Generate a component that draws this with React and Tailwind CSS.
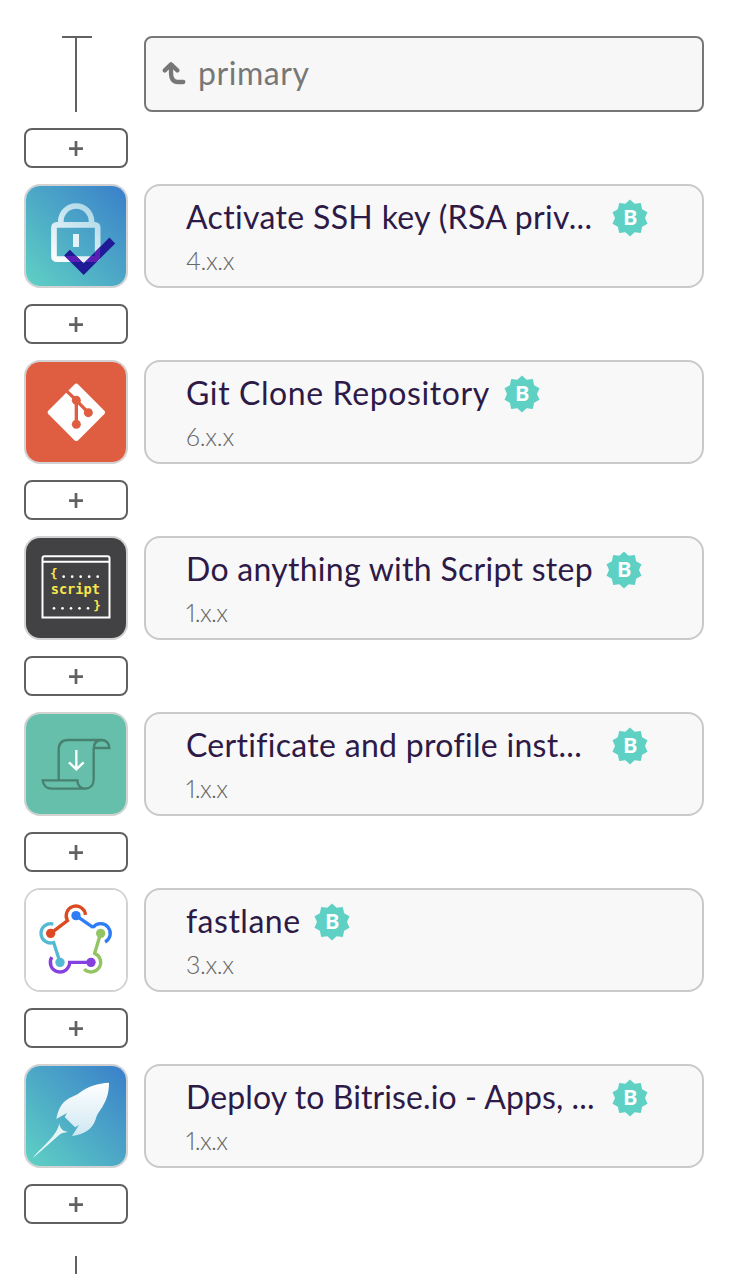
import { useId } from "react";

const STEPS = [
  { title: "Activate SSH key (RSA priv...", version: "4.x.x", Icon: LockIcon, width: "w-[414px]", tracking: "tracking-[0.33px]", versionTracking: "tracking-[-0.4px]" },
  { title: "Git Clone Repository", version: "6.x.x", Icon: GitIcon, width: "w-[306px]", tracking: "tracking-[0.6px]", versionTracking: "tracking-[-0.2px]" },
  { title: "Do anything with Script step", version: "1.x.x", Icon: ScriptIcon, width: "w-[408px]", tracking: "tracking-[0.28px]", versionTracking: "tracking-[-0.65px]" },
  { title: "Certificate and profile inst...", version: "1.x.x", Icon: CertificateIcon, width: "w-[414px]", tracking: "tracking-[0.3px]", versionTracking: "tracking-[-0.65px]" },
  { title: "fastlane", version: "3.x.x", Icon: FastlaneIcon, width: "w-[116px]", tracking: "tracking-[0.5px]", versionTracking: "tracking-[-0.4px]" },
  { title: "Deploy to Bitrise.io - Apps, ...", version: "1.x.x", Icon: RocketIcon, width: "w-[414px]", tracking: "tracking-[0.1px]", versionTracking: "tracking-[-0.65px]" },
];

export default function App() {
  return (
    <main className="h-[1274px] w-[748px] overflow-hidden bg-white pl-6 pt-9 font-['Lato',sans-serif]">
      <div className="flex flex-col gap-4">
        <WorkflowHeader />
        <AddButton />
        {STEPS.map((step) => (
          <Step key={step.title} {...step} />
        ))}
      </div>
      <div className="mt-8 flex w-[104px] justify-center">
        <div className="h-8 w-0.5 bg-[#616161]" />
      </div>
    </main>
  );
}

function WorkflowHeader() {
  return (
    <div className="flex gap-4">
      <div className="flex h-[76px] w-[104px] flex-col items-center">
        <div className="ml-0.5 h-0.5 w-[30px] bg-[#616161]" />
        <div className="w-0.5 flex-1 bg-[#616161]" />
      </div>
      <div className="flex h-[76px] w-[560px] items-center rounded-lg border-2 border-[#777] bg-[#f7f7f7] pb-0.5 pl-4 text-[#777]">
        <svg className="mr-3 h-6 w-6" viewBox="0 0 24 24" fill="none" stroke="currentColor" strokeWidth="4.300" strokeLinecap="round" strokeLinejoin="round">
          <path d="M2.800 9.400 9 3.300l6.300 6.100M9 4v7.500c0 6 2.500 9.500 7 9.500H21.300" />
        </svg>
        <span className="text-[32px] leading-10 tracking-[0.55px]">primary</span>
      </div>
    </div>
  );
}

function Step({ title, version, Icon, width, tracking, versionTracking }) {
  return (
    <>
      <div className="flex gap-4">
        <div className="h-[104px] w-[104px] overflow-hidden rounded-2xl border-2 border-[#d2d2d2]">
          <Icon />
        </div>
        <div className="h-[104px] w-[560px] rounded-2xl border-2 border-[#c9c9c9] bg-[#f8f8f8] pl-10 pt-3">
          <div className="flex h-10 items-center gap-3">
            <h2 className={`whitespace-nowrap pb-0.5 text-[32px] leading-10 text-[#2e1a47] ${width} ${tracking}`}>{title}</h2>
            <Badge />
          </div>
          <p className={`mt-1.5 text-[25px] font-light proportional-nums leading-8 text-[#666] ${versionTracking}`}>{version}</p>
        </div>
      </div>
      <AddButton />
    </>
  );
}

function AddButton() {
  return (
    <button className="flex h-10 w-[104px] items-center justify-center rounded-lg border-2 border-[#616161] bg-white">
      <svg className="h-4 w-4" viewBox="0 0 16 16" stroke="#616161" strokeWidth="2.700">
        <path d="M8 1v15M1 8.600h14" />
      </svg>
    </button>
  );
}

// Ten-pointed seal, alternating outer and inner radius
const SEAL_POINTS = Array.from({ length: 20 }, (_, i) => {
  const r = i % 2 ? 15 : 18.4;
  const a = (i * Math.PI) / 10;
  return `${(18 + r * Math.sin(a)).toFixed(2)},${(18 - r * Math.cos(a)).toFixed(2)}`;
}).join(" ");

function Badge() {
  return (
    <svg className="h-9 w-9 overflow-visible" viewBox="0 0 36 36">
      <polygon points={SEAL_POINTS} fill="#5fd1c4" />
      <text x="18.2" y="25.3" textAnchor="middle" fontSize="21" fontWeight="900" fill="#fff">B</text>
    </svg>
  );
}

/* --- step icons ------------------------------------------------------ */

function LockIcon() {
  const id = useId();
  return (
    <svg className="h-full w-full" viewBox="30 30 300 300" fill="none">
      <defs>
        <linearGradient id={`${id}bg`} x1="0" y1="1" x2="1" y2="0">
          <stop stopColor="#5fd1c4" />
          <stop offset="1" stopColor="#3a7fca" />
        </linearGradient>
        <linearGradient id={`${id}lock`} x1="110" y1="258" x2="240" y2="90" gradientUnits="userSpaceOnUse">
          <stop stopColor="#fff" />
          <stop offset="1" stopColor="#a9d5e6" />
        </linearGradient>
        <clipPath id={`${id}ring`}>
          <path clipRule="evenodd" d="M106 138h147v120H106zM122 155v85h115v-85z" />
        </clipPath>
      </defs>
      <path fill={`url(#${id}bg)`} d="M30 30h300v300H30z" />
      <path stroke={`url(#${id}lock)`} strokeWidth="17" d="M134.5 142v-6a46 46 0 0 1 92 0v6" />
      <rect x="114" y="146.500" width="131" height="103" rx="8" stroke={`url(#${id}lock)`} strokeWidth="17" />
      <path fill="#e4f3f7" d="M171 174h18v39h-18z" />
      <path stroke="#1f1a96" strokeWidth="24.500" d="m153 230 50 49.500 86-86" />
      <path stroke="#5a20b4" strokeWidth="24.500" d="m153 230 50 49.500 86-86" clipPath={`url(#${id}ring)`} />
    </svg>
  );
}

function GitIcon() {
  return (
    <svg className="h-full w-full" viewBox="30 30 300 300">
      <path fill="#df5d40" d="M30 30h300v300H30z" />
      <rect x="118" y="118" width="126" height="126" rx="8" fill="#fff" transform="rotate(45 181 181)" />
      <path d="m150 115 31 30 36 37M181 145v72" fill="none" stroke="#df5d40" strokeWidth="10" />
      <g fill="#df5d40">
        <circle cx="181" cy="145" r="13.500" />
        <circle cx="217" cy="182" r="13.500" />
        <circle cx="181" cy="217" r="13.500" />
      </g>
    </svg>
  );
}

function ScriptIcon() {
  return (
    <svg className="h-full w-full" viewBox="30 30 300 300">
      <path fill="#424143" d="M30 30h300v300H30z" />
      <path d="M79.500 268.500V91q0-6 6-6h189q6 0 6 6v177.500zM80 101h200" fill="none" stroke="#fff" strokeWidth="6" />
      <g fill="#f9e64f" fontFamily="DejaVu Sans Mono, monospace" fontSize="41" fontWeight="700">
        <text x="102" y="147" fontSize="38">{"{"}</text>
        <text x="104" y="198">script</text>
        <text x="232" y="243" fontSize="38">{"}"}</text>
      </g>
      <g fill="#fff">
        {[143, 168.5, 194, 219.5, 245].map((x) => (
          <circle key={x} cx={x} cy="146" r="4" />
        ))}
        {[114, 139.5, 165, 190.5, 216].map((x) => (
          <circle key={x} cx={x} cy="241" r="4" />
        ))}
      </g>
    </svg>
  );
}

function CertificateIcon() {
  return (
    <svg className="h-full w-full" viewBox="30 30 300 300" fill="none" strokeWidth="7">
      <path fill="#66bfaa" d="M30 30h300v300H30z" />
      <path
        stroke="#47816f"
        d="M128 228v-91q0-29 29-29h98c15 0 24 9 25 24h-47M259 108c-18 0-26 11-26 26v92c0 18-11 28-25 28-15 0-24-11-24-25H80c2 15 12 25 27 25h101"
      />
      <path stroke="#fff" d="M181 138v57M159 175l22 21 22-21" />
    </svg>
  );
}

function FastlaneIcon() {
  return (
    <svg className="h-full w-full" viewBox="30 30 300 300" fill="none" strokeWidth="10">
      <path fill="#fff" d="M30 30h300v300H30z" />
      <path stroke="#dc4a22" d="M104 160 154.500 121.800A29 29 0 1 1 208.400 104.400" />
      <path stroke="#2f7df6" d="M180 107 231.100 142.100V144.500V142.100A29 29 0 1 1 267.200 185.800" />
      <path stroke="#93c464" d="M254 160 235.900 220.100A29 29 0 1 1 204.500 267.500" />
      <path stroke="#8540e0" d="M225 247H161A29 29 0 1 1 107.400 231.600" />
      <path stroke="#52bbd3" d="M132 247 113 187.600A29 29 0 1 1 112 132.100" />
      <circle cx="180" cy="107" r="14" fill="#2f7df6" />
      <circle cx="254" cy="160" r="14" fill="#93c464" />
      <circle cx="225" cy="247" r="14" fill="#8540e0" />
      <circle cx="132" cy="247" r="14" fill="#52bbd3" />
      <circle cx="104" cy="160" r="14" fill="#dc4a22" />
    </svg>
  );
}

function RocketIcon() {
  const id = useId();
  return (
    <svg className="h-full w-full" viewBox="30 30 300 300">
      <defs>
        <linearGradient id={`${id}bg`} x1="0" y1="1" x2="1" y2="0">
          <stop stopColor="#5fd1c4" />
          <stop offset="1" stopColor="#3a7fca" />
        </linearGradient>
        <linearGradient id={`${id}hull`} x1="0" y1="0" x2="0" y2="1">
          <stop stopColor="#fff" />
          <stop offset="1" stopColor="#cfe7f2" />
        </linearGradient>
      </defs>
      <path fill={`url(#${id}bg)`} d="M30 30h300v300H30z" />
      <path
        fill={`url(#${id}hull)`}
        d="M279 80c-34 2-62 11-85 28-8 6-13 9-22 13-32 12-45 35-51 68l32-18-7 12 31 31 12-7-21 33c34-3 62-20 71-50 4-14 7-18 14-28 17-26 26-47 26-82z"
      />
      <path fill="#e6f6f6" d="M51 306 C72 277 128 236 129 202c4 17 12 24 27 26-12 1-22 4-30 12z" />
    </svg>
  );
}
